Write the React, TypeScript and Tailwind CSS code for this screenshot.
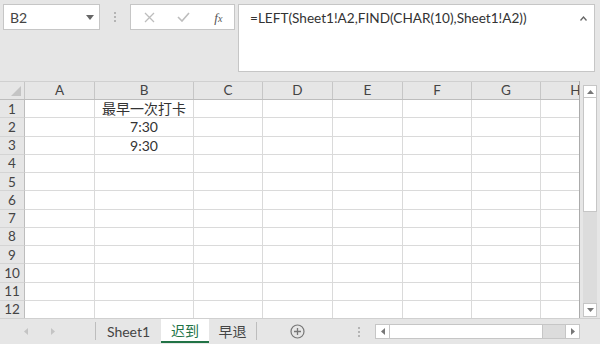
import React from "react";

const cols = [
  { name: "A", w: "w-[70px]" },
  { name: "B", w: "w-[99px]" },
  { name: "C", w: "w-[69px]" },
  { name: "D", w: "w-[70px]" },
  { name: "E", w: "w-[70px]" },
  { name: "F", w: "w-[69px]" },
  { name: "G", w: "w-[69px]" },
  { name: "H", w: "w-[70px]" },
];

const cellData: Record<string, string> = {
  "1-B": "最早一次打卡",
  "2-B": "7:30",
  "3-B": "9:30",
};

const rows = [1, 2, 3, 4, 5, 6, 7, 8, 9, 10, 11, 12];

export default function App() {
  return (
    <div className="w-[600px] h-[344px] bg-[#e6e6e6] flex flex-col overflow-hidden font-['Lato','Noto_Sans_CJK_SC',sans-serif] text-[#333]">
      {/* formula bar */}
      <div className="h-[81px] flex items-start pt-[4px] pl-[3px] shrink-0">
        <div className="w-[97px] h-[26px] bg-white border border-[#c6c6c6] flex items-center justify-between pl-[6px] pr-[5px]">
          <span className="text-[14px] text-[#444]">B2</span>
          <svg width="8" height="5" viewBox="0 0 8 5">
            <path d="M0 0 L8 0 L4 5 Z" fill="#666" />
          </svg>
        </div>
        <div className="w-[30px] h-[26px] flex flex-col items-center justify-center gap-[2px]">
          <span className="w-[2px] h-[2px] bg-[#b4b4b4]" />
          <span className="w-[2px] h-[2px] bg-[#b4b4b4]" />
          <span className="w-[2px] h-[2px] bg-[#b4b4b4]" />
        </div>
        <div className="w-[105px] h-[26px] bg-white border border-[#c6c6c6] flex items-center">
          <div className="w-[35px] flex justify-center pl-[2px]">
            <svg width="11" height="11" viewBox="0 0 11 11">
              <path d="M1 1 L10 10 M10 1 L1 10" stroke="#bdbdbd" strokeWidth="1.3" />
            </svg>
          </div>
          <div className="w-[35px] flex justify-center pl-[2px]">
            <svg width="13" height="10" viewBox="0 0 13 10">
              <path d="M1 5 L5 9 L12 1" stroke="#bdbdbd" strokeWidth="1.6" fill="none" />
            </svg>
          </div>
          <div className="w-[35px] flex justify-center pl-[3px]">
            <span className="font-['Liberation_Serif',serif] italic text-[13px] text-[#555] leading-none">
              f<span className="text-[10px]">x</span>
            </span>
          </div>
        </div>
        <div className="ml-[3px] w-[357px] h-[68px] bg-white border border-[#c6c6c6] flex justify-between pl-[11px] pr-[7px] pt-[4px]">
          <span className="text-[13.6px] text-[#333] leading-[18px]">=LEFT(Sheet1!A2,FIND(CHAR(10),Sheet1!A2))</span>
          <svg width="7" height="5" viewBox="0 0 7 5" className="mt-[7px]">
            <path d="M0.5 4.5 L3.5 1 L6.5 4.5" stroke="#666" strokeWidth="1.3" fill="none" />
          </svg>
        </div>
      </div>

      {/* sheet grid */}
      <div className="h-[237px] flex shrink-0">
        <div className="w-[580px] h-full overflow-hidden border-r border-[#ababab] bg-white">
          <div className="flex h-[19px] bg-[#e6e6e6] border-b border-[#bdbdbd] border-t border-t-[#d0d0d0]">
            <div className="w-[25px] shrink-0 border-r border-[#c6c6c6] flex items-end justify-end pr-[3px] pb-[3px]">
              <svg width="10" height="10" viewBox="0 0 10 10">
                <path d="M10 0 L10 10 L0 10 Z" fill="#c4c4c4" />
              </svg>
            </div>
            {cols.map((c) => (
              <div
                key={c.name}
                className={`${c.w} shrink-0 border-r border-[#c6c6c6] flex items-center justify-center text-[13.5px] text-[#444]`}
              >
                {c.name}
              </div>
            ))}
          </div>
          {rows.map((r) => (
            <div key={r} className="flex h-[18.27px]">
              <div className="w-[25px] shrink-0 bg-[#e6e6e6] border-r border-r-[#bdbdbd] border-b border-b-[#d4d4d4] flex items-center justify-center text-[13.5px] text-[#444]">
                {r}
              </div>
              {cols.map((c) => (
                <div
                  key={c.name}
                  className={`${c.w} shrink-0 border-r border-b border-[#dadada] flex items-center justify-center text-[14px] text-[#333] whitespace-nowrap`}
                >
                  {cellData[`${r}-${c.name}`] ?? ""}
                </div>
              ))}
            </div>
          ))}
        </div>
        {/* vertical scrollbar */}
        <div className="ml-[3px] mt-[4px] w-[14px] h-[232px] flex flex-col bg-[#dcdcdc]">
          <div className="h-[13px] bg-white border border-[#c6c6c6] flex items-center justify-center">
            <svg width="7" height="4" viewBox="0 0 7 4">
              <path d="M0 4 L3.5 0 L7 4 Z" fill="#777" />
            </svg>
          </div>
          <div className="h-[114px] bg-white border border-t-0 border-[#c6c6c6]" />
          <div className="flex-1" />
          <div className="h-[14px] bg-white border border-[#c6c6c6] flex items-center justify-center">
            <svg width="7" height="4" viewBox="0 0 7 4">
              <path d="M0 0 L7 0 L3.5 4 Z" fill="#777" />
            </svg>
          </div>
        </div>
      </div>

      {/* sheet tabs */}
      <div className="h-[26px] flex items-start shrink-0 border-t border-[#d0d0d0]">
        <div className="w-[95px] h-[25px] flex items-center">
          <div className="w-[28px] flex justify-end">
            <svg width="4" height="7" viewBox="0 0 4 7">
              <path d="M4 0 L0 3.5 L4 7 Z" fill="#c4c4c4" />
            </svg>
          </div>
          <div className="w-[27px] flex justify-end">
            <svg width="4" height="7" viewBox="0 0 4 7">
              <path d="M0 0 L4 3.5 L0 7 Z" fill="#c4c4c4" />
            </svg>
          </div>
        </div>
        <div className="w-px h-[18px] mt-[3px] bg-[#bdbdbd]" />
        <div className="w-[65px] h-[25px] flex items-center justify-center text-[14px] text-[#444]">Sheet1</div>
        <div className="w-[48px] h-[24px] bg-white border-b-2 border-[#217346] flex items-center justify-center text-[14px] text-[#217346]">
          迟到
        </div>
        <div className="w-[47px] h-[25px] flex items-center justify-center text-[14px] text-[#444]">早退</div>
        <div className="w-px h-[18px] mt-[3px] bg-[#bdbdbd]" />
        <div className="w-[79px] h-[25px] flex items-center justify-center pl-[1px]">
          <svg width="15" height="15" viewBox="0 0 15 15">
            <circle cx="7.5" cy="7.5" r="6.5" stroke="#777" strokeWidth="1.2" fill="none" />
            <path d="M7.5 4 V11 M4 7.5 H11" stroke="#777" strokeWidth="1.3" />
          </svg>
        </div>
        <div className="ml-[14px] w-[18px] h-[25px] flex flex-col items-center justify-center gap-[2px]">
          <span className="w-[2px] h-[2px] bg-[#b4b4b4]" />
          <span className="w-[2px] h-[2px] bg-[#b4b4b4]" />
          <span className="w-[2px] h-[2px] bg-[#b4b4b4]" />
        </div>
        <div className="ml-[7px] mt-[5px] w-[205px] h-[15px] bg-[#dcdcdc] border border-[#c6c6c6] flex">
          <div className="w-[14px] h-full bg-white border-r border-[#c6c6c6] flex items-center justify-center">
            <svg width="4" height="7" viewBox="0 0 4 7">
              <path d="M4 0 L0 3.5 L4 7 Z" fill="#777" />
            </svg>
          </div>
          <div className="w-[153px] h-full bg-white border-r border-[#c6c6c6]" />
          <div className="flex-1" />
          <div className="w-[14px] h-full bg-white border-l border-[#c6c6c6] flex items-center justify-center">
            <svg width="4" height="7" viewBox="0 0 4 7">
              <path d="M0 0 L4 3.5 L0 7 Z" fill="#777" />
            </svg>
          </div>
        </div>
      </div>
    </div>
  );
}
